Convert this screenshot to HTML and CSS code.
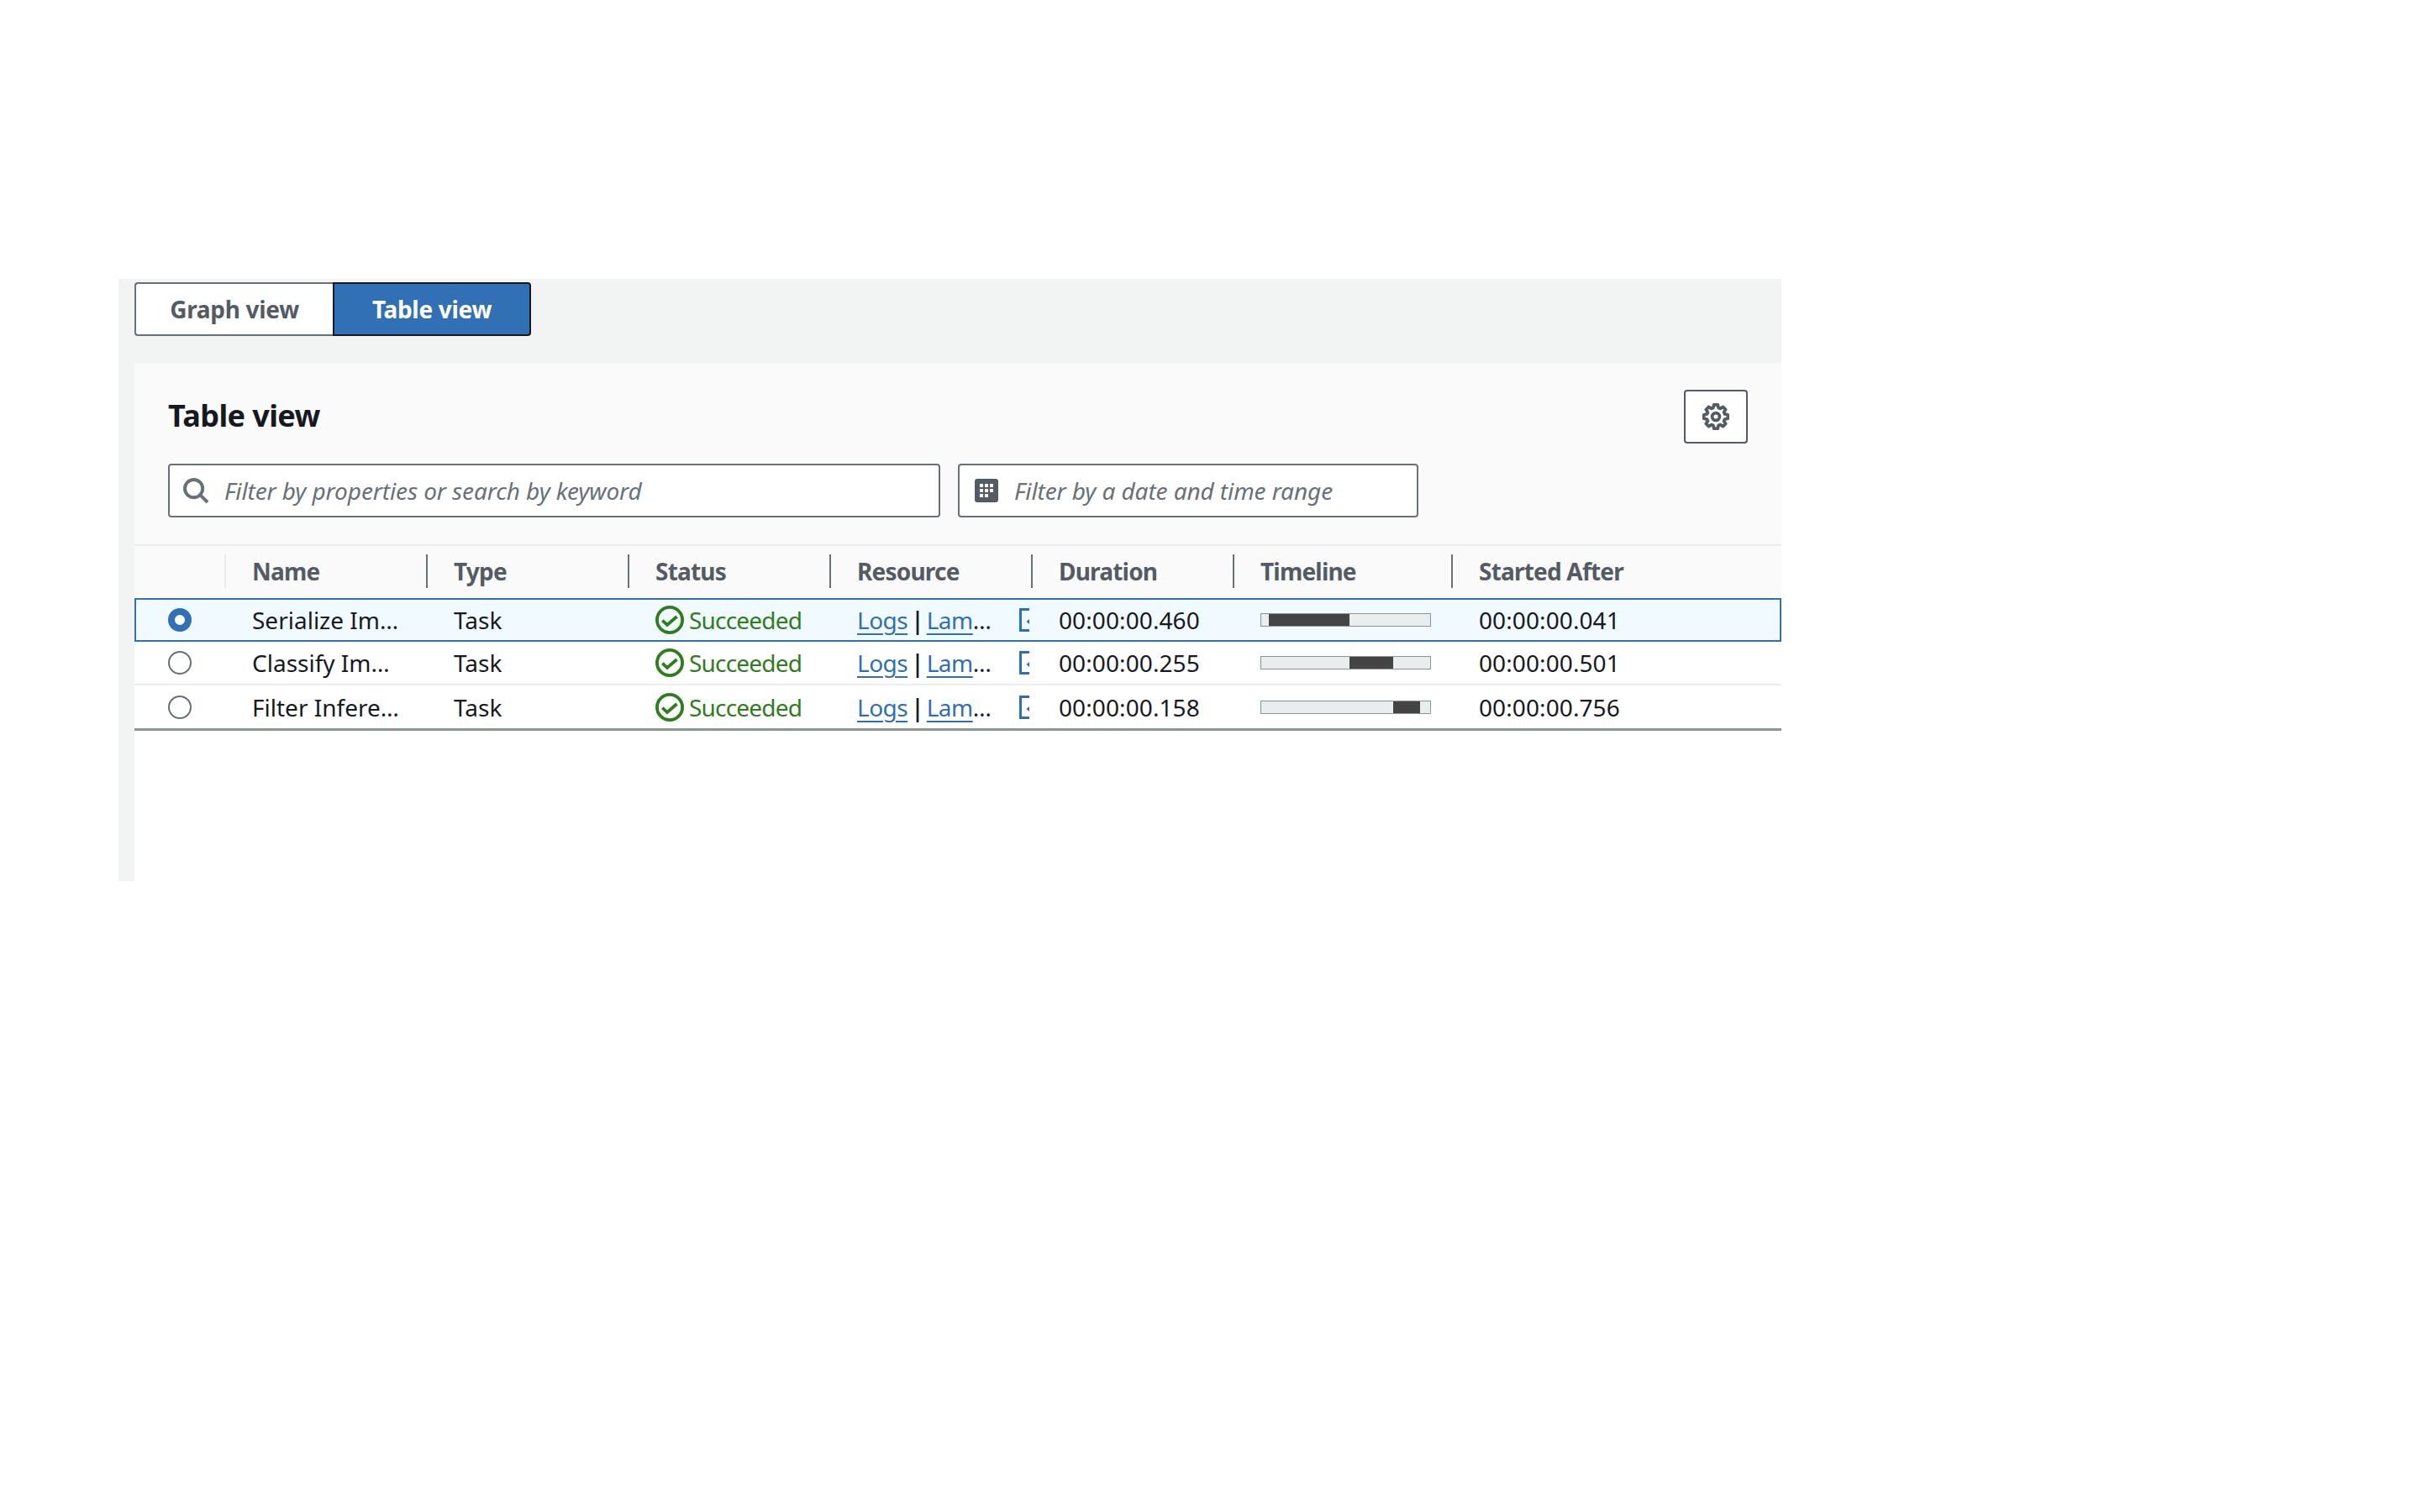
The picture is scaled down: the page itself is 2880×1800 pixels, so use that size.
FILE: index.html
```html
<!DOCTYPE html>
<html>
    <head>
        <title>Table view</title>
        <link rel="stylesheet" href="styles.css">
    </head>
    <body>
        <div class="shell">
            <div class="tabs">
                <button class="tab">Graph view</button>
                <button class="tab tab-active">Table view</button>
            </div>
            <div class="panel">
                <div class="panel-head">
                    <div class="title-row">
                        <h2>Table view</h2>
                        <button class="gear-btn">
                            <svg class="gear" viewBox="-8 -8 16 16">
                                <polygon points="5.29,-1.52 7.11,-1.13 7.11,1.13 5.29,1.52 4.81,2.67 5.82,4.23 4.23,5.82 2.67,4.81 1.52,5.29 1.13,7.11 -1.13,7.11 -1.52,5.29 -2.67,4.81 -4.23,5.82 -5.82,4.23 -4.81,2.67 -5.29,1.52 -7.11,1.13 -7.11,-1.13 -5.29,-1.52 -4.81,-2.67 -5.82,-4.23 -4.23,-5.82 -2.67,-4.81 -1.52,-5.29 -1.13,-7.11 1.13,-7.11 1.52,-5.29 2.67,-4.81 4.23,-5.82 5.82,-4.23 4.81,-2.67"/>
                                <circle cx="0" cy="0" r="2.2"/>
                            </svg>
                        </button>
                    </div>
                    <div class="filter-row">
                        <div class="filter filter-search">
                            <svg class="filter-icon" viewBox="0 0 16 16">
                                <circle cx="6.8" cy="6.8" r="5.3"/>
                                <path d="M10.6 10.6 15 15"/>
                            </svg>
                            <span>Filter by properties or search by keyword</span>
                        </div>
                        <div class="filter filter-date">
                            <svg class="cal-icon" viewBox="0 0 28 28">
                                <rect width="28" height="28" rx="3"/>
                                <path class="cal-dots" d="M6 6h4v4H6zM12 6h4v4h-4zM18 6h4v4h-4zM6 12h4v4H6zM12 12h4v4h-4zM18 12h4v4h-4zM6 18h4v4H6zM12 18h4v4h-4z"/>
                            </svg>
                            <span>Filter by a date and time range</span>
                        </div>
                    </div>
                </div>

                <div class="row row-head">
                    <div class="cell"></div>
                    <div class="cell th th-light">Name</div>
                    <div class="cell th">Type</div>
                    <div class="cell th">Status</div>
                    <div class="cell th">Resource</div>
                    <div class="cell th">Duration</div>
                    <div class="cell th">Timeline</div>
                    <div class="cell th">Started After</div>
                </div>

                <div class="row row-selected">
                    <div class="cell cell-radio"><span class="radio radio-on"></span></div>
                    <div class="cell">Serialize Im…</div>
                    <div class="cell">Task</div>
                    <div class="cell status">
                        <svg class="ok-icon" viewBox="0 0 16 16"><circle cx="8" cy="8" r="7.1"/><path d="M3.9 8.3 6.6 10.8 12 6.1"/></svg>
                        <span>Succeeded</span>
                    </div>
                    <div class="cell resource">
                        <span class="links"><a href="#">Logs</a><span class="pipe">|</span><a href="#">Lam</a>…</span>
                        <span class="ext-wrap"><svg class="ext-icon" viewBox="0 0 28 28"><path d="M12 1.5H1.5v25H12"/><polygon points="8.5,16 12.5,12.5 12.5,19.5"/></svg></span>
                    </div>
                    <div class="cell num">00:00:00.460</div>
                    <div class="cell"><div class="bar"><div class="bar-fill" style="margin-left:9px;width:96px"></div></div></div>
                    <div class="cell num">00:00:00.041</div>
                </div>

                <div class="row row-line">
                    <div class="cell cell-radio"><span class="radio"></span></div>
                    <div class="cell">Classify Im…</div>
                    <div class="cell">Task</div>
                    <div class="cell status">
                        <svg class="ok-icon" viewBox="0 0 16 16"><circle cx="8" cy="8" r="7.1"/><path d="M3.9 8.3 6.6 10.8 12 6.1"/></svg>
                        <span>Succeeded</span>
                    </div>
                    <div class="cell resource">
                        <span class="links"><a href="#">Logs</a><span class="pipe">|</span><a href="#">Lam</a>…</span>
                        <span class="ext-wrap"><svg class="ext-icon" viewBox="0 0 28 28"><path d="M12 1.5H1.5v25H12"/><polygon points="8.5,16 12.5,12.5 12.5,19.5"/></svg></span>
                    </div>
                    <div class="cell num">00:00:00.255</div>
                    <div class="cell"><div class="bar"><div class="bar-fill" style="margin-left:105px;width:52px"></div></div></div>
                    <div class="cell num">00:00:00.501</div>
                </div>

                <div class="row row-last">
                    <div class="cell cell-radio"><span class="radio"></span></div>
                    <div class="cell">Filter Infere…</div>
                    <div class="cell">Task</div>
                    <div class="cell status">
                        <svg class="ok-icon" viewBox="0 0 16 16"><circle cx="8" cy="8" r="7.1"/><path d="M3.9 8.3 6.6 10.8 12 6.1"/></svg>
                        <span>Succeeded</span>
                    </div>
                    <div class="cell resource">
                        <span class="links"><a href="#">Logs</a><span class="pipe">|</span><a href="#">Lam</a>…</span>
                        <span class="ext-wrap"><svg class="ext-icon" viewBox="0 0 28 28"><path d="M12 1.5H1.5v25H12"/><polygon points="8.5,16 12.5,12.5 12.5,19.5"/></svg></span>
                    </div>
                    <div class="cell num">00:00:00.158</div>
                    <div class="cell"><div class="bar"><div class="bar-fill" style="margin-left:157px;width:32px"></div></div></div>
                    <div class="cell num">00:00:00.756</div>
                </div>
            </div>
        </div>
    </body>
</html>
```

FILE: styles.css
```css
body {
    margin: 0;
    background-color: #fff;
    color: #16191f;
    font-family: "Noto Sans", "Open Sans", sans-serif;
    font-size: 28px;
}
.shell {
    margin: 332px 0 0 141px;
    width: 1979px;
    height: 717px;
    background-color: #f2f3f3;
    display: flex;
    flex-direction: column;
    padding-left: 19px;
    box-sizing: border-box;
}

/* view switch */
.tabs {
    display: flex;
    height: 100px;
    padding-top: 4px;
    box-sizing: border-box;
    flex: none;
}
.tab {
    height: 64px;
    font-family: inherit;
    font-size: 28px;
    font-weight: 700;
    letter-spacing: -0.3px;
    color: #545b64;
    background-color: #fff;
    border: 2px solid #687078;
    border-right: none;
    border-radius: 4px 0 0 4px;
    width: 236px;
    padding: 0;
}
.tab-active {
    width: 236px;
    color: #fff;
    background-color: #3170b5;
    border: 2px solid #16191f;
    border-radius: 0 4px 4px 0;
}

/* panel */
.panel {
    flex: 1;
    background-color: #fff;
}
.panel-head {
    background-color: #fafafa;
    padding: 32px 40px 32px;
    border-bottom: 2px solid #eaeded;
}
.title-row {
    display: flex;
    justify-content: space-between;
    align-items: center;
    margin-bottom: 24px;
}
h2 {
    margin: 0 0 4px;
    font-size: 36px;
    font-weight: 700;
    letter-spacing: -0.6px;
}
.gear-btn {
    width: 76px;
    height: 64px;
    padding: 0;
    background-color: #fff;
    border: 2px solid #545b64;
    border-radius: 4px;
    display: flex;
    align-items: center;
    justify-content: center;
}
.gear {
    width: 32px;
    height: 32px;
    fill: none;
    stroke: #545b64;
    stroke-width: 1.9;
    stroke-linejoin: round;
}
.filter-row {
    display: flex;
    gap: 21px;
}
.filter {
    height: 64px;
    box-sizing: border-box;
    background-color: #fff;
    border: 2px solid #687078;
    border-radius: 4px;
    display: flex;
    align-items: center;
    color: #687078;
    font-style: italic;
    letter-spacing: -0.1px;
}
.filter-search {
    width: 919px;
    padding-left: 15px;
}
.filter-date {
    width: 548px;
    padding-left: 18px;
}
.filter-icon {
    width: 32px;
    height: 32px;
    margin-right: 18px;
    fill: none;
    stroke: #687078;
    stroke-width: 2;
}
.cal-icon {
    width: 28px;
    height: 28px;
    margin-right: 19px;
    fill: #545b64;
}
.cal-dots {
    fill: #fff;
}

/* table */
.row {
    display: grid;
    grid-template-columns: 107px repeat(5, 240px) 260px 1fr;
    align-items: center;
    height: 52px;
    box-sizing: border-box;
}
.cell {
    padding-left: 33px;
    white-space: nowrap;
    display: flex;
    align-items: center;
}
.num {
    letter-spacing: 0.1px;
}
.row-head {
    height: 62px;
    padding-bottom: 2px;
    background-color: #fafafa;
}
.th {
    height: 40px;
    padding-left: 31px;
    border-left: 2px solid #687078;
    font-weight: 700;
    letter-spacing: -0.8px;
    color: #545b64;
}
.th-light {
    border-left-color: #eaeded;
}
.row-selected {
    background-color: #f1faff;
    outline: 2px solid #3170b5;
    outline-offset: -2px;
}
.row-line {
    border-bottom: 2px solid #eaeded;
}
.row-last {
    height: 54px;
    border-bottom: 3px solid #8d9599;
}
.cell-radio {
    padding-left: 40px;
}
.radio {
    width: 28px;
    height: 28px;
    box-sizing: border-box;
    border: 2px solid #687078;
    border-radius: 50%;
    background-color: #fff;
}
.radio-on {
    border: 8px solid #3170b5;
}
.status {
    color: #2f7d1e;
    letter-spacing: -0.8px;
}
.ok-icon {
    width: 34px;
    height: 34px;
    margin-right: 6px;
    flex: none;
    fill: none;
    stroke: #2f7d1e;
    stroke-width: 1.8;
}
.links {
    width: 193px;
    flex: none;
}
.links a {
    color: #2f6fb5;
    letter-spacing: -0.5px;
    text-decoration: underline;
    text-underline-offset: 5px;
    text-decoration-thickness: 2px;
}
.pipe {
    margin: 0 3px 0 4px;
    font-weight: 600;
}
.ext-wrap {
    width: 12px;
    height: 28px;
    overflow: hidden;
    flex: none;
}
.ext-icon {
    width: 28px;
    height: 28px;
    display: block;
    fill: #2f6fb5;
}
.ext-icon path {
    fill: none;
    stroke: #2f6fb5;
    stroke-width: 3;
}
.bar {
    width: 203px;
    height: 16px;
    box-sizing: border-box;
    background-color: #eaeded;
    border: 1px solid #879596;
}
.bar-fill {
    height: 100%;
    background-color: #444;
}
```
